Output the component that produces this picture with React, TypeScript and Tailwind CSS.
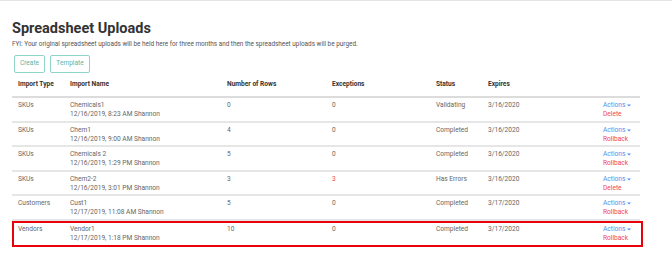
const rows = [
  { type: "SKUs", name: "Chemicals1", meta: "12/16/2019, 8:23 AM Shannon", count: "0", exc: "0", status: "Validating", expires: "3/16/2020", action: "Delete" },
  { type: "SKUs", name: "Chem1", meta: "12/16/2019, 9:00 AM Shannon", count: "4", exc: "0", status: "Completed", expires: "3/16/2020", action: "Rollback" },
  { type: "SKUs", name: "Chemicals 2", meta: "12/16/2019, 1:29 PM Shannon", count: "5", exc: "0", status: "Completed", expires: "3/16/2020", action: "Rollback" },
  { type: "SKUs", name: "Chem2-2", meta: "12/16/2019, 3:01 PM Shannon", count: "3", exc: "3", status: "Has Errors", expires: "3/16/2020", action: "Delete" },
  { type: "Customers", name: "Cust1", meta: "12/17/2019, 11:08 AM Shannon", count: "5", exc: "0", status: "Completed", expires: "3/17/2020", action: "Rollback" },
  { type: "Vendors", name: "Vendor1", meta: "12/17/2019, 1:18 PM Shannon", count: "10", exc: "0", status: "Completed", expires: "3/17/2020", action: "Rollback", flagged: true },
];

const cols = "grid grid-cols-[52px_157px_105px_104px_52px_115px_1fr]";

const App = () => {
  return (
    <div className="w-[672px] h-[272px] bg-white border-t border-[#e4e4e4] font-['Roboto',sans-serif] overflow-hidden">
      <div className="pl-[12px] pt-[17px]">
        {/* heading */}
        <h1 className="text-[14.5px] leading-[21px] font-bold text-[#333]">Spreadsheet Uploads</h1>
        <p className="text-[6.4px] leading-[10px] text-[#555]">
          FYI: Your original spreadsheet uploads will be held here for three months and then the spreadsheet uploads will be purged.
        </p>

        <div className="flex gap-[5px] mt-[6px] pl-[2px]">
          <button className="h-[18px] w-[31px] rounded-[2px] border border-[#8fd4c9] text-[6.6px] text-[#5db5a6]">Create</button>
          <button className="h-[18px] w-[40px] rounded-[2px] border border-[#8fd4c9] text-[6.6px] text-[#5db5a6]">Template</button>
        </div>

        <div className="w-[628px] mt-[1px]">
          <div className={`${cols} pl-[6px] h-[24px] items-center border-b-2 border-[#dcdcdc] text-[6.6px] font-bold text-[#333]`}>
            <div>Import Type</div>
            <div>Import Name</div>
            <div>Number of Rows</div>
            <div>Exceptions</div>
            <div>Status</div>
            <div>Expires</div>
            <div></div>
          </div>

          {rows.map((r, i) => (
            <div
              key={i}
              className={
                r.flagged
                  ? `${cols} pl-[4px] w-[631px] h-[26px] pt-[2px] border-2 border-[#e8000b] text-[6.6px] leading-[9px] text-[#666]`
                  : `${cols} pl-[6px] h-[24.5px] pt-[3px] border-b-2 border-[#e6e6e6] text-[6.6px] leading-[9px] text-[#666]`
              }
            >
              <div>{r.type}</div>
              <div>
                <div>{r.name}</div>
                <div>{r.meta}</div>
              </div>
              <div>{r.count}</div>
              <div className={r.exc !== "0" ? "text-[#f0464f]" : ""}>{r.exc}</div>
              <div>{r.status}</div>
              <div>{r.expires}</div>
              <div>
                <div className="flex items-center gap-[2px] text-[#4f94e8]">
                  Actions
                  <svg width="4" height="3" viewBox="0 0 4 3"><path d="M0 0.5h4L2 2.5z" fill="#4f94e8" /></svg>
                </div>
                <div className="text-[#f0464f]">{r.action}</div>
              </div>
            </div>
          ))}
        </div>
      </div>
    </div>
  );
};

export default App;
